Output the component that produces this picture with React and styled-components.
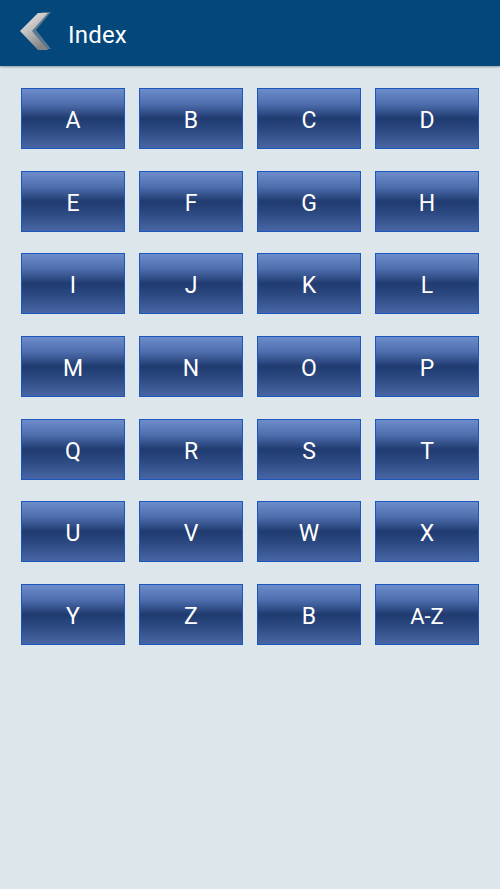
import React from 'react';
import styled, { createGlobalStyle } from 'styled-components';

const GlobalStyle = createGlobalStyle`
  html, body {
    margin: 0;
    padding: 0;
    background: #dce6eb;
  }
  body {
    font-family: Roboto, "Liberation Sans", sans-serif;
  }
`;

const Page = styled.div`
  width: 500px;
  min-height: 889px;
  background: #dce6eb;
`;

const Header = styled.header`
  height: 66px;
  background: #03477b;
  display: flex;
  align-items: center;
  padding-left: 18px;
  box-sizing: border-box;
  box-shadow: 0 1px 2px rgba(0, 0, 0, 0.35);
  position: relative;
`;

const Back = styled.button`
  width: 36px;
  height: 44px;
  padding: 0;
  border: none;
  background: none;
  display: flex;
  align-items: center;
  justify-content: center;
  margin-right: 14px;
`;

const Title = styled.h1`
  margin: 3px 0 0;
  color: #fff;
  font-size: 24px;
  font-weight: 400;
  letter-spacing: 0.2px;
`;

const Grid = styled.div`
  display: grid;
  grid-template-columns: repeat(4, 104px);
  grid-auto-rows: 61px;
  column-gap: 14px;
  row-gap: 21.67px;
  padding: 22px 21px;
`;

const Key = styled.button`
  border: 1px solid #1a55c0;
  padding: 4px 0 0;
  margin: 0;
  background: linear-gradient(
    to bottom,
    #6d8cca 0%,
    #4f6eae 25%,
    #1f3b70 50%,
    #2c4982 70%,
    #4866a4 100%
  );
  color: #fff;
  font-family: Roboto, "Liberation Sans", sans-serif;
  font-size: ${(p) => (p.$wide ? '22px' : '23px')};
  font-weight: 400;
  display: flex;
  align-items: center;
  justify-content: center;
  cursor: pointer;
`;

const keys = 'ABCDEFGHIJKLMNOPQRSTUVWXYZ'.split('').concat(['B', 'A-Z']);

function Chevron() {
  return (
    <svg width="36" height="44" viewBox="0 0 36 44">
      <defs>
        <linearGradient id="chev" x1="0" y1="0" x2="0.6" y2="1">
          <stop offset="0" stopColor="#f4f4f4" />
          <stop offset="0.45" stopColor="#c4c4c4" />
          <stop offset="1" stopColor="#858585" />
        </linearGradient>
      </defs>
      <path d="M6 19 L24 1 L33 1 L18 19 L33 38 L24 38 Z" fill="#7a8794" opacity="0.75" />
      <path d="M2 20 L20 2 L30 2 L14 20 L30 39 L20 39 Z" fill="url(#chev)" />
    </svg>
  );
}

export default function App() {
  return (
    <Page>
      <GlobalStyle />
      <Header>
        <Back aria-label="back">
          <Chevron />
        </Back>
        <Title>Index</Title>
      </Header>
      <Grid>
        {keys.map((k, i) => (
          <Key key={i} $wide={k.length > 1}>
            {k}
          </Key>
        ))}
      </Grid>
    </Page>
  );
}
